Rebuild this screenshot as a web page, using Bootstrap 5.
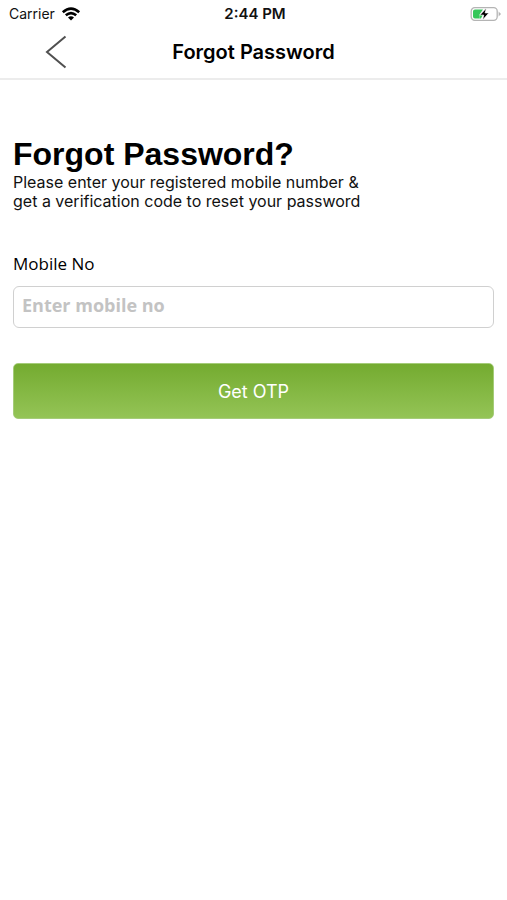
<!DOCTYPE html>
<html lang="en">
<head>
<meta charset="utf-8">
<meta name="viewport" content="width=device-width, initial-scale=1">
<title>Forgot Password</title>
<link href="https://cdn.jsdelivr.net/npm/bootstrap@5.3.0/dist/css/bootstrap.min.css" rel="stylesheet">
<style>
  body { font-family: Inter, "Liberation Sans", sans-serif; color: #111; background: #fff; }
  .status-bar { height: 27px; padding: 0 6px 0 9px; font-size: 14px; line-height: 27px; }
  .carrier { gap: 6px; }
  .status-time { font-size: 15px; font-weight: 600; }
  .title-bar { height: 53px; padding-bottom: 1px; border-bottom: 2px solid #ececec; }
  .title-bar h1 { font-size: 20px; line-height: 24px; font-weight: 600; color: #000; }
  .side { flex: 1 1 0; }
  .back-btn { margin-left: 44px; }
  .screen { padding: 56px 13px 24px; }
  .headline { font: 700 32px/36px "Liberation Sans", Arial, sans-serif; color: #000; }
  .intro { font-size: 16px; line-height: 19px; padding-top: 1px; max-width: 360px; margin-bottom: 41px; }
  .field-label { font: 400 17px/24px "Open Sans", "Noto Sans", sans-serif; margin-bottom: 10px; color: #000; }
  .field-input.form-control { height: 42px; padding: 0 8px 5px; border: 1px solid #d0d0d0; border-radius: 6px; font: 700 18px/24px "Open Sans", "Noto Sans", sans-serif; color: #222; }
  .field-input::placeholder { color: #c3c3c3; opacity: 1; }
  .otp-btn { height: 56px; margin-top: 35px; border: 1px solid #a5cc79; border-radius: 5px; background: linear-gradient(#74ab30, #94c456); color: #fff; font-size: 18px; }
  .otp-btn:hover { color: #fff; background: #74ab30; }
</style>
</head>
<body>
<div class="status-bar d-flex align-items-center">
  <div class="side carrier d-flex align-items-center">
    <span>Carrier</span>
    <svg width="20" height="14" viewBox="0 0 20 14" fill="none" stroke="#000" stroke-width="2.6" aria-label="Wi-Fi">
      <path d="M1.8 5.2Q10-2 18.2 5.2M4.8 8.3Q10 3.8 15.2 8.3"/>
      <path d="M7 10.6Q10 8 13 10.6L10 13.6Z" fill="#000" stroke="none"/>
    </svg>
  </div>
  <span class="status-time">2:44 PM</span>
  <div class="side d-flex align-items-center justify-content-end">
    <svg width="31" height="16" viewBox="0 0 31 16" aria-label="Battery charging">
      <rect x="1.2" y="1.7" width="26" height="12.6" rx="3.5" fill="#fff" stroke="#b4b4b4" stroke-width="1.3"/>
      <path d="M28.6 5.5L31 8L28.6 10.5Z" fill="#b4b4b4"/>
      <path d="M5 3.5H13L9.5 8.5V12.5H5Q3 12.5 3 10.5V5.5Q3 3.5 5 3.5Z" fill="#35c75a"/>
      <path d="M9.5 8.5H13L11 12.5H9.5Z" fill="#35c75a"/>
      <path d="M16.5 2L9.8 9.1H13.7L12.6 14L18.9 6.9H15.1Z" fill="#000" stroke="#fff" stroke-width=".7"/>
    </svg>
  </div>
</div>
<header class="title-bar d-flex align-items-center">
  <div class="side">
    <button type="button" class="back-btn btn p-0 border-0 d-flex" aria-label="Back">
      <svg width="24" height="34" viewBox="0 0 24 34" fill="none" stroke="#505050" stroke-width="2"><path d="M21.5 1.5L3 17L21.5 32.5"/></svg>
    </button>
  </div>
  <h1 class="m-0">Forgot Password</h1>
  <div class="side"></div>
</header>
<main class="screen">
  <h2 class="headline mb-0">Forgot Password?</h2>
  <p class="intro">Please enter your registered mobile number &amp; get a verification code to reset your password</p>
  <form>
    <label class="field-label d-block" for="mobile">Mobile No</label>
    <input class="field-input form-control" id="mobile" type="tel" placeholder="Enter mobile no">
    <button class="otp-btn btn w-100 d-block" type="submit">Get OTP</button>
  </form>
</main>
<script src="https://cdn.jsdelivr.net/npm/bootstrap@5.3.0/dist/js/bootstrap.bundle.min.js"></script>
</body>
</html>
